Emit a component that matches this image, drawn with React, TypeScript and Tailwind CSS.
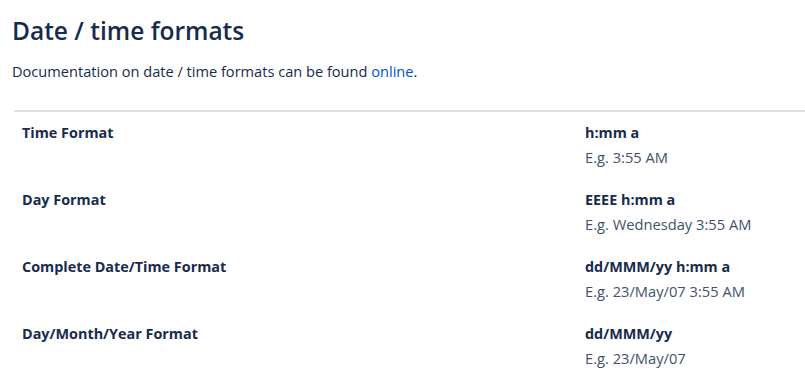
import React from 'react';

const formats = [
    { label: 'Time Format', pattern: 'h:mm a', example: 'E.g. 3:55 AM' },
    { label: 'Day Format', pattern: 'EEEE h:mm a', example: 'E.g. Wednesday 3:55 AM' },
    { label: 'Complete Date/Time Format', pattern: 'dd/MMM/yy h:mm a', example: 'E.g. 23/May/07 3:55 AM' },
    { label: 'Day/Month/Year Format', pattern: 'dd/MMM/yy', example: 'E.g. 23/May/07' },
];

export default function App() {
    return (
        <div className="min-h-screen bg-white text-[#172b4d] font-['Open_Sans',sans-serif]">
            <div className="pl-3 pt-[15px]">
                <h1 className="text-[24.5px] leading-[32px] font-semibold text-[#172b4d]">
                    Date / time formats
                </h1>
                <p className="mt-[14px] text-[14.6px] leading-[20px] text-[#172b4d]">
                    Documentation on date / time formats can be found{' '}
                    <a href="#" className="text-[#0052cc]">online</a>.
                </p>
            </div>

            {/* format table */}
            <div className="ml-[14px] mt-[29px] border-t-2 border-[#dfe1e6]">
                {formats.map((f) => (
                    <div key={f.label} className="grid grid-cols-[563px_1fr] pt-[9px] pb-[10px]">
                        <div className="px-2 text-[14.4px] leading-[24px] font-bold">{f.label}</div>
                        <div className="px-2 text-[14.4px] leading-[24px]">
                            <div className="font-bold">{f.pattern}</div>
                            <div className="text-[14.7px] leading-[24px] text-[#42526e]">{f.example}</div>
                        </div>
                    </div>
                ))}
            </div>
        </div>
    );
}
